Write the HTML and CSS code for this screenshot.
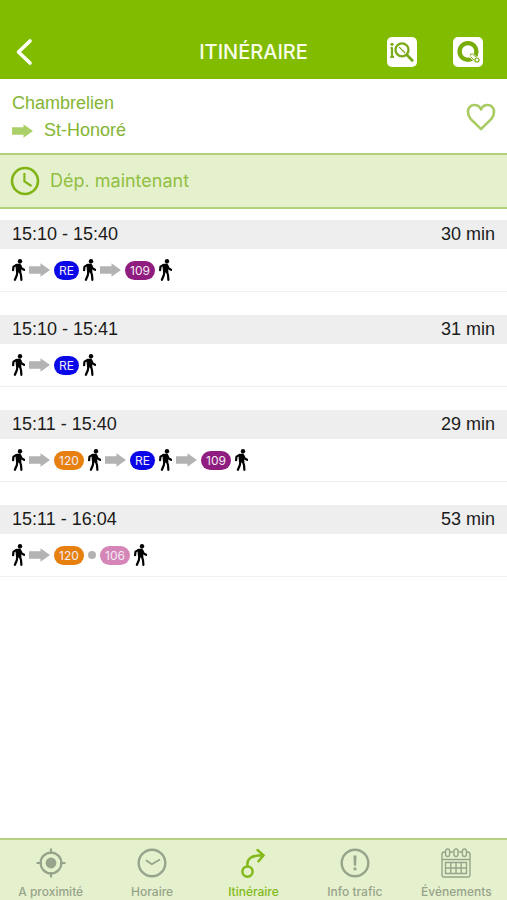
FILE: index.html
```html
<!DOCTYPE html>
<html lang="fr">
<head>
<meta charset="utf-8">
<meta name="viewport" content="width=device-width, initial-scale=1">
<title>Itinéraire</title>
<link rel="stylesheet" href="styles.css">
</head>
<body>
<svg class="sprite" aria-hidden="true">
  <symbol id="walk" viewBox="0 0 13 22">
    <circle cx="8" cy="2.2" r="2.2" fill="#000"/>
    <path d="M4 5.6 8 5.1 8.8 12.8H4.6Z" fill="#000" stroke="#000" stroke-width="1.2" stroke-linejoin="round"/>
    <path d="M4.6 5.9 1.5 7.6 1.1 11.2M8.3 6.5 9.7 9.5 12.1 10.8M5.4 12.4 4.8 16.3 2.9 20.8M7.8 12.4 9 16 9.4 20.8" fill="none" stroke="#000" stroke-width="2.2" stroke-linecap="round" stroke-linejoin="round"/>
  </symbol>
  <symbol id="arrow" viewBox="0 0 21 14">
    <path d="M0 3.2H11.5V.2L21 7 11.5 13.8V10.8H0Z" fill="currentColor"/>
  </symbol>
</svg>

<header class="topbar">
  <button class="icon-button back" aria-label="Retour">
    <svg width="18" height="28" viewBox="0 0 18 28"><path d="M15 3 3.5 14 15 25" fill="none" stroke="#fff" stroke-width="3.6" stroke-linecap="round" stroke-linejoin="round"/></svg>
  </button>
  <h1>ITINÉRAIRE</h1>
  <div class="actions">
    <button class="icon-button" aria-label="Recherche d'informations">
      <svg width="30" height="30" viewBox="0 0 30 30"><rect width="30" height="30" rx="5" fill="#fff"/><g fill="none" stroke="#79a916"><path d="M5 10.5V20.5M3.5 11H5.5M3.3 20H7" stroke-width="2.2"/><circle cx="15" cy="12.8" r="6.5" stroke-width="2.3"/><path d="M12 9.8 18 16" stroke-width="1.2"/><path d="M19.8 17.8 26 24.3" stroke-width="2.8"/></g><circle cx="5" cy="7.3" r="1.6" fill="#79a916"/></svg>
    </button>
    <button class="icon-button" aria-label="Recherche rapide">
      <svg width="30" height="30" viewBox="0 0 30 30"><rect width="30" height="30" rx="5" fill="#fff"/><circle cx="15" cy="14.5" r="8.4" fill="none" stroke="#78ac0b" stroke-width="4.4"/><path d="M18.5 18.5 24 23.5" stroke="#fff" stroke-width="5.4" stroke-linecap="round"/><path d="M17.2 18.5Q17 16.5 19.5 17L23.5 20.5M17.5 19.5 21.5 23.5" fill="none" stroke="#78ac0b" stroke-width="1"/><circle cx="24" cy="23" r="2" fill="#fff" stroke="#78ac0b" stroke-width="1.2"/></svg>
    </button>
  </div>
</header>

<main>
  <section class="trip">
    <div class="stops">
      <p>Chambrelien</p>
      <p class="destination"><svg width="21" height="14"><use href="#arrow"/></svg>St-Honoré</p>
    </div>
    <button class="icon-button" aria-label="Ajouter aux favoris">
      <svg width="30" height="28" viewBox="0 0 30 28"><path d="M15 26.2 4.6 15.8C2.8 13.8 2 11.4 2 8.8 2 4.8 4.8 2 8.3 2 11.5 2 14 4 15 6.4 16 4 18.5 2 21.7 2 25.2 2 28 4.8 28 8.8 28 11.4 27.2 13.8 25.4 15.8Z" fill="none" stroke="#a8cb63" stroke-width="2.6" stroke-linejoin="round"/></svg>
    </button>
  </section>

  <button class="departure">
    <svg width="30" height="30" viewBox="0 0 30 30"><g fill="none" stroke="#80b414"><circle cx="15" cy="15" r="13" stroke-width="2.6"/><path d="M14.4 7V15.5L21.5 20" stroke-width="2.1"/></g></svg>
    Dép. maintenant
  </button>

  <section class="results">
    <article>
      <h2><span>15:10 - 15:40</span><span>30 min</span></h2>
      <div class="legs">
        <svg class="walk"><use href="#walk"/></svg><svg class="arrow"><use href="#arrow"/></svg><span class="line re">RE</span><svg class="walk"><use href="#walk"/></svg><svg class="arrow"><use href="#arrow"/></svg><span class="line bus-109">109</span><svg class="walk"><use href="#walk"/></svg>
      </div>
    </article>
    <article>
      <h2><span>15:10 - 15:41</span><span>31 min</span></h2>
      <div class="legs">
        <svg class="walk"><use href="#walk"/></svg><svg class="arrow"><use href="#arrow"/></svg><span class="line re">RE</span><svg class="walk"><use href="#walk"/></svg>
      </div>
    </article>
    <article>
      <h2><span>15:11 - 15:40</span><span>29 min</span></h2>
      <div class="legs">
        <svg class="walk"><use href="#walk"/></svg><svg class="arrow"><use href="#arrow"/></svg><span class="line bus-120">120</span><svg class="walk"><use href="#walk"/></svg><svg class="arrow"><use href="#arrow"/></svg><span class="line re">RE</span><svg class="walk"><use href="#walk"/></svg><svg class="arrow"><use href="#arrow"/></svg><span class="line bus-109">109</span><svg class="walk"><use href="#walk"/></svg>
      </div>
    </article>
    <article>
      <h2><span>15:11 - 16:04</span><span>53 min</span></h2>
      <div class="legs">
        <svg class="walk"><use href="#walk"/></svg><svg class="arrow"><use href="#arrow"/></svg><span class="line bus-120">120</span><span class="change"></span><span class="line bus-106">106</span><svg class="walk"><use href="#walk"/></svg>
      </div>
    </article>
  </section>
</main>

<nav class="tabs">
  <a href="#proximite"><svg width="30" height="30" viewBox="0 0 30 30"><g fill="none" stroke="currentColor" stroke-width="2.2"><circle cx="15" cy="15" r="10.4"/><path d="M15 .5V6M15 24V29.5M.5 15H6M24 15H29.5"/></g><circle cx="15" cy="15" r="5.4" fill="currentColor"/></svg>A proximité</a>
  <a href="#horaire"><svg width="30" height="30" viewBox="0 0 30 30"><g fill="none" stroke="currentColor" stroke-width="2.4"><circle cx="15" cy="15" r="13.3"/><path d="M9 12.2 14.8 16.2 23 11.5" stroke-width="1.9"/></g></svg>Horaire</a>
  <a href="#itineraire" class="active" aria-current="page"><svg width="30" height="30" viewBox="0 0 30 30"><g fill="none" stroke="currentColor" stroke-width="2.5" stroke-linecap="round"><circle cx="9.5" cy="23.6" r="5.1"/><path d="M9.5 18C8.5 10 13.5 7.5 25 7.3M19.5 2 25.5 7.3 20.5 13.3"/></g></svg>Itinéraire</a>
  <a href="#trafic"><svg width="30" height="30" viewBox="0 0 30 30"><circle cx="15" cy="15" r="13.3" fill="none" stroke="currentColor" stroke-width="2.4"/><path d="M13.4 7.5H16.6L16.1 17.8H13.9ZM13.6 19.5H16.4V22.3H13.6Z" fill="currentColor"/></svg>Info trafic</a>
  <a href="#evenements"><svg width="30" height="30" viewBox="0 0 30 30"><g fill="none" stroke="currentColor" stroke-width="1.4"><path d="M4.5 4H3.2Q1 4 1 6.2V26.8Q1 29 3.2 29H26.8Q29 29 29 26.8V6.2Q29 4 26.8 4H25.5M9 4H12.5M17.5 4H21M1 11.5H29"/><rect x="4.6" y="1" width="4" height="7.5" rx="2"/><rect x="13" y="1" width="4" height="7.5" rx="2"/><rect x="21.4" y="1" width="4" height="7.5" rx="2"/><path d="M4.5 14.5H25.5V25.5H4.5ZM4.5 20H25.5M9.8 14.5V25.5M15 14.5V25.5M20.2 14.5V25.5"/></g></svg>Événements</a>
</nav>
</body>
</html>
```
FILE: styles.css
```css
* {
  box-sizing: border-box;
}

body {
  margin: 0;
  min-height: 100vh;
  display: flex;
  flex-direction: column;
  background: #fff;
  font-family: "Liberation Sans", Arial, sans-serif;
  font-size: 18px;
}

svg {
  display: block;
  flex: none;
}

.sprite {
  width: 0;
  height: 0;
  position: absolute;
}

h1, h2, p {
  margin: 0;
  font-weight: 400;
}

button {
  border: 0;
  background: none;
  padding: 0;
  font: inherit;
}

.topbar {
  display: grid;
  grid-template-columns: 1fr auto 1fr;
  align-items: center;
  padding: 25px 15px 0;
  height: 79px;
  background: #82bc00;
}

.back {
  justify-self: start;
}

h1 {
  color: #f8fdea;
  font: 500 20px/24px Inter, sans-serif;
}

.actions {
  display: flex;
  gap: 36px;
  justify-self: end;
  margin-right: 9px;
}

.trip {
  display: flex;
  align-items: center;
  justify-content: space-between;
  padding: 11px 11px 9px 12px;
  color: #83b532;
  line-height: 27px;
}

.destination {
  display: flex;
  align-items: center;
  gap: 11px;
}

.destination svg {
  color: #abd069;
}

.departure {
  display: flex;
  align-items: center;
  gap: 10px;
  width: 100%;
  height: 56px;
  padding: 0 10px;
  border-top: 2px solid #b3d17b;
  border-bottom: 2px solid #b3d17b;
  background: #e5f1cc;
  color: #91bf42;
  font: 400 18px/24px Inter, sans-serif;
}

.results {
  display: grid;
  gap: 23px;
  padding-top: 11px;
}

h2 {
  display: flex;
  align-items: center;
  justify-content: space-between;
  height: 29px;
  padding: 0 12px;
  background: #eee;
  color: #1b1b1b;
  font-size: 18px;
}

.legs {
  display: flex;
  align-items: center;
  gap: 4px;
  height: 43px;
  padding: 0 12px;
  border-bottom: 1px solid #f0f0f0;
}

.walk {
  width: 13px;
  height: 22px;
}

.arrow {
  width: 21px;
  height: 14px;
  color: #b3b3b3;
}

.line {
  width: 30px;
  border-radius: 10px;
  color: #f4ecf4;
  font: 400 12px/19px Inter, sans-serif;
  text-align: center;
}

.re {
  width: 25px;
  background: #0a08e8;
}

.bus-109 {
  background: #8f1d7f;
}

.bus-120 {
  background: #e7800f;
}

.bus-106 {
  background: #d585b8;
}

.change {
  width: 8px;
  height: 8px;
  border-radius: 50%;
  background: #b3b3b3;
}

.tabs {
  display: grid;
  grid-template-columns: repeat(5, 1fr);
  height: 62px;
  margin-top: auto;
  padding-top: 8px;
  border-top: 2px solid #b7d183;
  background: #e5f1cc;
}

.tabs a {
  display: flex;
  flex-direction: column;
  align-items: center;
  gap: 6px;
  color: #98a38c;
  font: 500 12px/15px Inter, sans-serif;
  text-decoration: none;
}

.tabs .active {
  color: #82b91b;
}
```
